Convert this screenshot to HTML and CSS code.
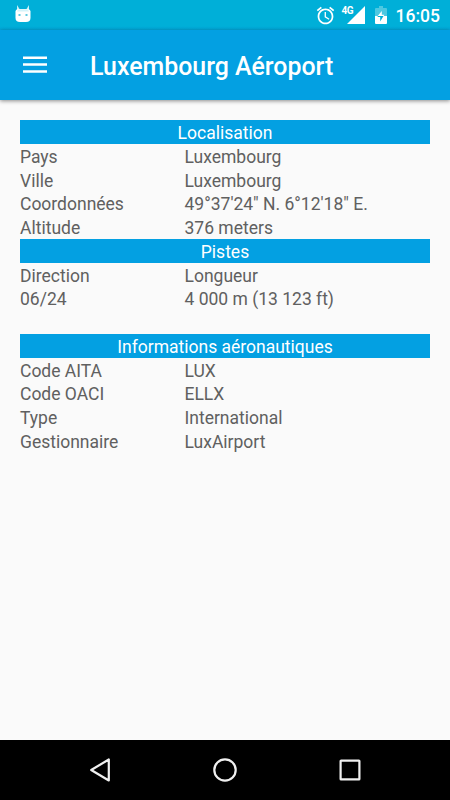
FILE: index.html
```html
<!DOCTYPE html>
<html lang="fr">
<head>
    <meta charset="UTF-8">
    <meta name="viewport" content="width=device-width, initial-scale=1.0">
    <title>Luxembourg Aéroport</title>
    <link rel="stylesheet" href="styles.css">
</head>
<body>
    <div class="status-bar">
        <svg class="status-cat" width="16" height="18" viewBox="0 0 16 18">
            <path d="M2 0 L4.500 4 H11.500 L14 0 V6 H2 Z" fill="#c9f0f8"/>
            <path d="M0.500 6 Q1 4 4 4 H12 Q15 4 15.500 6 V13 Q15.500 17 11 17 H5 Q0.500 17 0.500 13 Z" fill="#fff"/>
            <path d="M2 6.500 Q2.500 4.200 5 4.200 H11 Q13.500 4.200 14 6.500 Z" fill="#d5f3f9"/>
            <path d="M3.500 9 H5.500 V11 H3.500 Z M10.500 9 H12.500 V11 H10.500 Z" fill="#5cc9e0"/>
        </svg>
        <div class="status-icons">
            <svg class="status-alarm" width="21" height="21" viewBox="0 0 24 24" fill="#fff">
                <path d="M22 5.720l-4.600-3.860-1.290 1.530 4.600 3.860L22 5.720zM7.880 3.390L6.600 1.860 2 5.710l1.290 1.530 4.590-3.850zM12.500 8H11v6l4.750 2.850.75-1.230-4-2.370V8zM12 4c-4.970 0-9 4.030-9 9s4.020 9 9 9c4.970 0 9-4.030 9-9s-4.030-9-9-9zm0 16c-3.870 0-7-3.130-7-7s3.130-7 7-7 7 3.130 7 7-3.130 7-7 7z"/>
            </svg>
            <span class="network">4G</span>
            <svg class="status-signal" width="18" height="18" viewBox="0 0 18 18">
                <path d="M18 0 V18 H0 Z" fill="#fff"/>
            </svg>
            <svg class="status-battery" width="12" height="18" viewBox="0 0 12 18">
                <path d="M4 0 H8 V2 H11 Q12 2 12 3 V10 H0 V3 Q0 2 1 2 H4 Z" fill="#4dc8e1"/>
                <path d="M0 10 H12 V17 Q12 18 11 18 H1 Q0 18 0 17 Z" fill="#fff"/>
                <path d="M6.800 5 V8.800 H9.300 L8.500 10.200 H2.500 Z" fill="#fff"/>
                <path d="M2.700 10 V11 H5.200 V15.500 L8.500 10 Z" fill="#00afd8"/>
            </svg>
            <span class="clock">16:05</span>
        </div>
    </div>

    <header class="toolbar">
        <button class="menu-button" aria-label="Menu">
            <svg width="24" height="18" viewBox="0 0 24 18">
                <path d="M0 1.700 H24 M0 8.500 H24 M0 15.500 H24" stroke="#fff" stroke-width="2.500"/>
            </svg>
        </button>
        <h1>Luxembourg Aéroport</h1>
    </header>

    <main class="content">
        <h2>Localisation</h2>
        <div class="row"><span>Pays</span><span>Luxembourg</span></div>
        <div class="row"><span>Ville</span><span>Luxembourg</span></div>
        <div class="row"><span>Coordonnées</span><span>49°37'24" N. 6°12'18" E.</span></div>
        <div class="row"><span>Altitude</span><span>376 meters</span></div>

        <h2>Pistes</h2>
        <div class="row"><span>Direction</span><span>Longueur</span></div>
        <div class="row"><span>06/24</span><span>4 000 m (13 123 ft)</span></div>
        <div class="row"></div>

        <h2>Informations aéronautiques</h2>
        <div class="row"><span>Code AITA</span><span>LUX</span></div>
        <div class="row"><span>Code OACI</span><span>ELLX</span></div>
        <div class="row"><span>Type</span><span>International</span></div>
        <div class="row"><span>Gestionnaire</span><span>LuxAirport</span></div>
    </main>

    <nav class="nav-bar">
        <svg width="26" height="26" viewBox="0 0 26 26">
            <path d="M21.800 2.500 V23.500 L4.200 13 Z"/>
        </svg>
        <svg width="26" height="26" viewBox="0 0 26 26">
            <circle cx="13" cy="13" r="10.700"/>
        </svg>
        <svg width="26" height="26" viewBox="0 0 26 26">
            <rect x="3.600" y="3.600" width="18.800" height="18.800" rx="0.500"/>
        </svg>
    </nav>
</body>
</html>
```

FILE: styles.css
```css
:root {
    --status: #00afd8;
    --primary: #03a0e2;
    --background: #fafafa;
    --text: #606060;
}

* {
    box-sizing: border-box;
}

body {
    margin: 0;
    height: 100vh;
    display: flex;
    flex-direction: column;
    overflow: hidden;
    font-family: Roboto, sans-serif;
    font-size: 17.5px;
    background: var(--background);
    color: var(--text);
}

/* --- Status bar --- */
.status-bar {
    height: 30px;
    flex-shrink: 0;
    display: flex;
    justify-content: space-between;
    padding: 0 10px 0 14.5px;
    background: linear-gradient(var(--status) 26px, #03a8dc);
    color: #fff;
}

.status-cat {
    margin-top: 5px;
}

.status-icons {
    display: flex;
    align-items: flex-start;
}

.status-alarm {
    margin-top: 5px;
}

.network {
    width: 11px;
    margin: 5px -6px 0 6px;
    font-size: 10px;
    font-weight: 700;
    line-height: 12px;
    letter-spacing: -0.5px;
}

.status-signal {
    margin-top: 6px;
}

.status-battery {
    margin: 6px 9px 0 10px;
}

.clock {
    font-weight: 500;
    line-height: 32px;
}

/* --- Toolbar --- */
.toolbar {
    height: 70px;
    flex-shrink: 0;
    display: flex;
    align-items: center;
    padding-left: 23px;
    background: var(--primary);
    color: #fff;
    box-shadow: 0 1px 4px rgba(0, 0, 0, 0.45);
}

.menu-button {
    display: flex;
    margin-right: 43px;
    padding: 0;
    border: none;
    background: none;
}

.toolbar h1 {
    margin: 3px 0 0;
    font-size: 24.9px;
    font-weight: 500;
    line-height: 30px;
}

/* --- Airport details --- */
.content {
    flex: 1;
    padding: 20px 20px 0;
}

.content h2 {
    height: 23.75px;
    margin: 0;
    background: var(--primary);
    color: #fff;
    font-size: 17.5px;
    font-weight: 400;
    line-height: 26px;
    text-align: center;
}

.row {
    display: grid;
    grid-template-columns: 164.5px 1fr;
    height: 23.75px;
    line-height: 26px;
}

/* --- Navigation buttons --- */
.nav-bar {
    height: 60px;
    flex-shrink: 0;
    display: flex;
    align-items: center;
    justify-content: center;
    gap: 99px;
    background: #000;
}

.nav-bar svg {
    fill: none;
    stroke: #f0f0f0;
    stroke-width: 2.2;
    stroke-linejoin: round;
}
```
